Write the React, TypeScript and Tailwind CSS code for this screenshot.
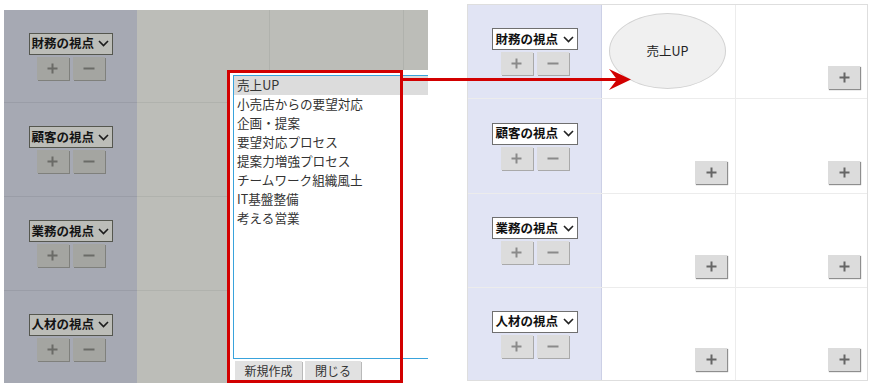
import React from "react";

const FONT = "font-['Noto_Sans_CJK_JP','Noto_Sans',sans-serif]";

function Chevron({ color }: { color: string }) {
  return (
    <svg width="11" height="7" viewBox="0 0 11 7" className="shrink-0">
      <path d="M1 1 L5.5 5.6 L10 1" fill="none" stroke={color} strokeWidth="1.6" />
    </svg>
  );
}

function PlusGlyph({ color }: { color: string }) {
  return (
    <svg width="11" height="11" viewBox="0 0 11 11">
      <path d="M5.5 0.5v10M0.5 5.5h10" stroke={color} strokeWidth="2" />
    </svg>
  );
}

function MinusGlyph({ color }: { color: string }) {
  return (
    <svg width="12" height="11" viewBox="0 0 12 11">
      <path d="M0.5 5.5h11" stroke={color} strokeWidth="2" />
    </svg>
  );
}

function Selector({ label, dim }: { label: string; dim?: boolean }) {
  return (
    <div className="flex flex-col items-center gap-[2px]">
      <div
        className={
          dim
            ? "flex h-[22px] w-[84px] items-center justify-between border border-[#55574f] bg-[#bcbdb8] pl-[2px] pr-[3px]"
            : "flex h-[22px] w-[86px] items-center justify-between border border-[#6f6f6f] bg-white pl-[3px] pr-[3px]"
        }
      >
        <span className={`${FONT} text-[12.5px] font-bold leading-none ${dim ? "text-[#141414]" : "text-[#111]"}`}>
          {label}
        </span>
        <Chevron color={dim ? "#1c1c1c" : "#222"} />
      </div>
      <div className="flex gap-[4px]">
        <div
          className={
            dim
              ? "flex h-[23px] w-[32px] items-center justify-center bg-[#a4a5a1] shadow-[1px_1px_0_#7f807c]"
              : "flex h-[23px] w-[32px] items-center justify-center bg-[#dcdcdc] shadow-[1px_1px_0_#a9a9a9]"
          }
        >
          <PlusGlyph color={dim ? "#6a6b67" : "#8a8a8a"} />
        </div>
        <div
          className={
            dim
              ? "flex h-[23px] w-[32px] items-center justify-center bg-[#a4a5a1] shadow-[1px_1px_0_#7f807c]"
              : "flex h-[23px] w-[32px] items-center justify-center bg-[#dcdcdc] shadow-[1px_1px_0_#a9a9a9]"
          }
        >
          <MinusGlyph color={dim ? "#6a6b67" : "#8a8a8a"} />
        </div>
      </div>
    </div>
  );
}

function CellPlus() {
  return (
    <div className="flex h-[23px] w-[32px] items-center justify-center bg-[#dcdcdc] shadow-[1px_1px_1px_#8e8e8e]">
      <PlusGlyph color="#666" />
    </div>
  );
}

const labels = ["財務の視点", "顧客の視点", "業務の視点", "人材の視点"];
const items = [
  "売上UP",
  "小売店からの要望対応",
  "企画・提案",
  "要望対応プロセス",
  "提案力増強プロセス",
  "チームワーク組織風土",
  "IT基盤整備",
  "考える営業",
];

function LeftPanel() {
  const rowH = ["h-[92px]", "h-[94px]", "h-[94px]", "h-[93px]"];
  return (
    <div className="ml-[4px] mt-[10px] flex w-[424px] flex-col">
      {labels.map((l, i) => (
        <div key={l} className={`flex ${rowH[i]}`}>
          <div
            className={`flex w-[133px] items-center justify-center bg-[#a6a9b3] ${
              i > 0 ? "border-t border-[#9a9da7]" : ""
            }`}
          >
            <Selector label={l} dim />
          </div>
          <div className={`w-[132px] bg-[#bcbdb8] ${i > 0 ? "border-t border-[#b0b2ad]" : ""}`} />
          <div
            className={`w-[134px] border-l border-[#b0b2ad] bg-[#bcbdb8] ${i > 0 ? "border-t" : ""}`}
          />
          <div
            className={`w-[25px] border-l border-[#b0b2ad] bg-[#bcbdb8] ${i > 0 ? "border-t" : ""}`}
          />
        </div>
      ))}
    </div>
  );
}

function RightPanel() {
  const rowH = ["h-[94px]", "h-[95px]", "h-[94px]", "h-[92px]"];
  return (
    <div className="ml-[39px] mt-[4px] flex w-[401px] flex-col border border-[#dedede]">
      {labels.map((l, i) => (
        <div key={l} className={`flex ${rowH[i]} ${i < 3 ? "border-b border-[#ececec]" : ""}`}>
          <div className="flex w-[134px] items-center justify-center border-r border-[#ccd0e6] bg-[#e1e4f4]">
            <Selector label={l} />
          </div>
          <div className="flex w-[134px] border-r border-[#ececec]">
            {i === 0 ? (
              <div className="ml-[7px] mt-[8px] flex h-[76px] w-[117px] items-center justify-center rounded-[50%] border border-[#d2d2d2] bg-[#f0f0f0]">
                <span className={`${FONT} text-[12.5px] leading-none text-[#222]`}>売上UP</span>
              </div>
            ) : (
              <div className="flex flex-1 items-end justify-end pb-[9px] pr-[8px]">
                <CellPlus />
              </div>
            )}
          </div>
          <div className="flex flex-1 items-end justify-end pb-[9px] pr-[7px]">
            <CellPlus />
          </div>
        </div>
      ))}
    </div>
  );
}

function Popup() {
  return (
    <div className="absolute left-[227px] top-[70px] h-[313px] w-[201px] bg-white pl-[6px] pt-[5px]">
      <div className="h-[284px] w-[195px] border-b border-l border-t border-[#39a3dc]">
        {items.map((it, i) => (
          <div
            key={it}
            className={`flex h-[19px] items-center pl-[3px] ${FONT} text-[12.6px] leading-none text-[#333] ${
              i === 0 ? "bg-[#dcdcdc]" : ""
            }`}
          >
            {it}
          </div>
        ))}
      </div>
      <div className="ml-[2px] mt-[2px] flex gap-[3px]">
        <div
          className={`flex h-[19px] w-[67px] items-center justify-center bg-[#e1e1e1] shadow-[1px_1px_0_#b9b9b9] ${FONT} text-[12px] leading-none text-[#333]`}
        >
          新規作成
        </div>
        <div
          className={`flex h-[19px] w-[56px] items-center justify-center bg-[#e1e1e1] shadow-[1px_1px_0_#b9b9b9] ${FONT} text-[12px] leading-none text-[#333]`}
        >
          閉じる
        </div>
      </div>
    </div>
  );
}

export default function App() {
  return (
    <div className="relative flex h-[387px] w-[873px] items-start overflow-hidden bg-white">
      <LeftPanel />
      <RightPanel />
      <Popup />
      <div className="pointer-events-none absolute left-[227px] top-[70px] h-[313px] w-[176px] border-[3px] border-[#d20000]" />
      <svg
        className="pointer-events-none absolute left-[400px] top-[68px]"
        width="235"
        height="24"
        viewBox="0 0 235 24"
      >
        <path d="M2 11.5 H218" stroke="#d20000" strokeWidth="3" />
        <polygon points="231,11.5 209,1 217,11.5 209,22" fill="#d20000" />
      </svg>
    </div>
  );
}
